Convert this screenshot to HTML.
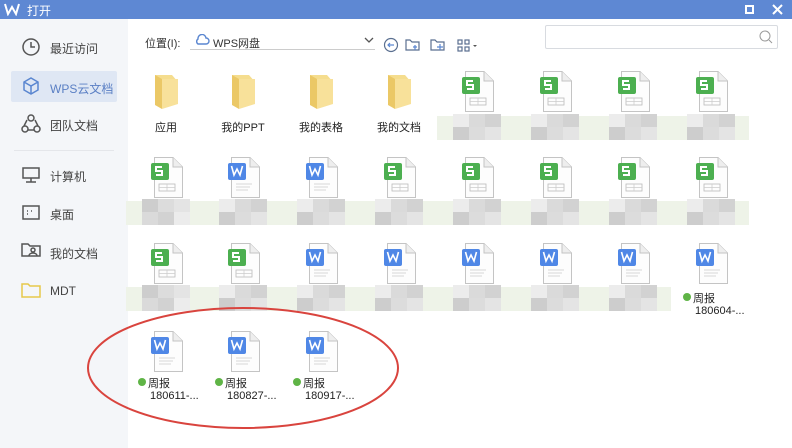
<!DOCTYPE html>
<html><head><meta charset="utf-8"><style>
*{margin:0;padding:0;box-sizing:border-box}
body{width:792px;height:448px;overflow:hidden;background:#fff;position:relative;font-family:"Liberation Sans","Noto Sans CJK SC",sans-serif;font-size:12px;color:#333}
.a{position:absolute}
#title{left:0;top:0;width:792px;height:19px;background:#5e88d3}
#side{left:0;top:19px;width:128px;height:429px;background:#f4f6f9}
.nav{position:absolute;left:20px;font-size:12px;color:#444}
.lbl{position:absolute;font-size:11px;color:#222;white-space:nowrap}
</style></head><body>
<div id="title" class="a">
 <svg class="a" style="left:4px;top:3px" width="16" height="13"><path d="M1 1 L4 11 L8 4 L12 11 L15 1" stroke="#fff" stroke-width="2" fill="none"/></svg>
 <div class="a" style="left:27px;top:2px;color:#fff;font-size:12px">打开</div>
 <div class="a" style="left:745px;top:5px;width:9px;height:9px;border:2px solid #fff"></div>
 <svg class="a" style="left:772px;top:4px" width="11" height="11"><path d="M1 1L10 10M10 1L1 10" stroke="#fff" stroke-width="2"/></svg>
</div>
<div id="side" class="a"></div>
<div class="a" style="left:11px;top:71px;width:106px;height:31px;background:#dfe7f4;border-radius:2px"></div>
<svg class="a" style="left:0;top:0" width="128" height="448" fill="none" stroke="#555" stroke-width="1.5">
 <circle cx="31" cy="47" r="8"/><path d="M31 42V47H35"/>
 <path d="M31 78L38 82V90L31 94L24 90V82Z M24 82L31 86L38 82M31 86V94" stroke="#5a86d0"/>
 <circle cx="31" cy="118" r="3"/><circle cx="25" cy="129" r="3"/><circle cx="37" cy="129" r="3"/><path d="M27 120L24 126M35 120L38 126M28 130H34"/>
 <rect x="23" y="168" width="16" height="10"/><path d="M31 178V182M26 182H36"/>
 <rect x="23" y="206" width="16" height="13"/><path d="M27 211h1M31 211h1M27 214h1"/>
 <path d="M22 244H28L30 246H40V256H22Z"/><circle cx="33" cy="250" r="2"/><path d="M29 256C29 252 37 252 37 256"/>
 <path d="M22 284H28L30 286H40V297H22Z" stroke="#e6c84a"/>
</svg>
<div class="nav" style="left:50px;top:40px">最近访问</div>
<div class="nav" style="left:50px;top:80px;color:#5a7fc4">WPS云文档</div>
<div class="nav" style="left:50px;top:117px">团队文档</div>
<div class="a" style="left:14px;top:150px;width:100px;height:1px;background:#e4e6ea"></div>
<div class="nav" style="left:50px;top:168px">计算机</div>
<div class="nav" style="left:50px;top:206px">桌面</div>
<div class="nav" style="left:50px;top:245px">我的文档</div>
<div class="nav" style="left:50px;top:284px">MDT</div>

<div class="a" style="left:145px;top:35px;font-size:11px;color:#333">位置(I):</div>
<div class="a" style="left:190px;top:49px;width:185px;height:1px;background:#ccc"></div>
<svg class="a" style="left:194px;top:34px" width="16" height="12"><path d="M4 10H12A3 3 0 0 0 12 4A4 4 0 0 0 4 5A3 3 0 0 0 4 10Z" stroke="#5a86d0" stroke-width="1.4" fill="none"/></svg>
<div class="a" style="left:213px;top:35px;font-size:11px">WPS网盘</div>
<svg class="a" style="left:364px;top:37px" width="10" height="7"><path d="M1 1L5 5L9 1" stroke="#555" stroke-width="1.3" fill="none"/></svg>
<svg class="a" style="left:382px;top:36px" width="100" height="18" fill="none" stroke="#5a6f90" stroke-width="1.2">
 <circle cx="9" cy="9" r="6.5"/><path d="M6 9H12M8 7L6 9L8 11" stroke="#5a86d0"/>
 <path d="M24 4H28L30 6H37V14H24Z"/><path d="M33 9V14M31 11H35" stroke="#5a86d0"/>
 <path d="M49 4H53L55 6H62V14H49Z"/><path d="M58 8V14M55 11H61" stroke="#5a86d0"/>
 <rect x="76" y="4" width="4" height="4"/><rect x="83" y="4" width="4" height="4"/><rect x="76" y="11" width="4" height="4"/><rect x="83" y="11" width="4" height="4"/>
 <path d="M91 9L95 9L93 11Z" fill="#555" stroke="none"/>
</svg>
<div class="a" style="left:545px;top:25px;width:233px;height:24px;border:1px solid #d8dbe0;border-radius:2px"></div>
<svg class="a" style="left:758px;top:29px" width="16" height="16"><circle cx="7" cy="7" r="5" stroke="#999" fill="none"/><path d="M11 11L14 14" stroke="#999"/></svg>

<div id="grid"></div>
<svg class="a" style="left:0;top:0" width="792" height="448"><ellipse cx="243" cy="368" rx="155" ry="60" fill="none" stroke="#d9443e" stroke-width="2"/></svg>
<script>
var cx=[166,243,321,399,477,555,633,711];
var g=document.getElementById('grid'),h='';
function folder(c,y,t){h+='<svg class="a" style="left:'+(c-12)+'px;top:'+y+'px" width="26" height="36"><path d="M1 1H18L24 8V30H1Z" fill="#f5dd8e"/><path d="M1 1L8 5V35L1 31Z" fill="#ebc866"/><path d="M8 5H24V30L8 35Z" fill="#f8e19a"/></svg><div class="lbl" style="left:'+(c-40)+'px;width:80px;text-align:center;top:'+(y+45)+'px">'+t+'</div>';}
function file(c,y,k){var col=k=='S'?'#4caf50':'#4f87e6';
 var body=k=='S'?'<rect x="8" y="27" width="16" height="7" fill="none" stroke="#bbb" stroke-width="0.8"/><path d="M8 30.5H24M16 27V34" stroke="#ccc" stroke-width="0.8"/>':'<path d="M8 27H24M8 30H22M8 33H20" stroke="#ccc" stroke-width="0.8"/>';
 var g2=k=='S'?'<path d="M11 10H5V14H11V18H5" stroke="#fff" stroke-width="2" fill="none"/>':'<path d="M3.5 9L6 18L9 12L12 18L14.5 9" stroke="#fff" stroke-width="1.6" fill="none"/>';
 h+='<svg class="a" style="left:'+(c-15)+'px;top:'+y+'px" width="34" height="42"><path d="M3.5 0.5H22L31.5 10V40.5H3.5Z" fill="#fdfdfd" stroke="#c4c4c4"/><path d="M22 0.5V10H31.5" fill="#eee" stroke="#c4c4c4"/>'+body+'<rect x="0" y="6" width="18" height="17" rx="2" fill="'+col+'"/><g transform="translate(0,0)">'+g2+'</g></svg>';}
function blur(c,y){var cols=['#dcdcdc','#d2d2d2','#e4e4e4','#ececec','#cdcdcd','#dadada'];
 h+='<div class="a" style="left:'+(c-40)+'px;top:'+(y+2)+'px;width:78px;height:24px;background:#eef3e8"></div>';
 for(var i=0;i<3;i++)for(var j=0;j<2;j++)h+='<div class="a" style="left:'+(c-24+i*16)+'px;top:'+(y+j*13)+'px;width:16px;height:13px;background:'+cols[(i*2+j+c)%6]+'"></div>';}
function lab(c,y,t){h+='<div class="a" style="left:'+(c-28)+'px;top:'+(y+3)+'px;width:8px;height:8px;border-radius:50%;background:#5fb446"></div><div class="lbl" style="left:'+(c-18)+'px;top:'+y+'px">周报</div><div class="lbl" style="left:'+(c-16)+'px;top:'+(y+15)+'px">'+t+'</div>';}
['应用','我的PPT','我的表格','我的文档'].forEach(function(t,i){folder(cx[i],74,t);});
for(var i=4;i<8;i++){file(cx[i],71,'S');blur(cx[i],114);}
'SWWSSSSS'.split('').forEach(function(k,i){file(cx[i],157,k);blur(cx[i],199);});
'SSWWWWWW'.split('').forEach(function(k,i){file(cx[i],243,k);if(i<7)blur(cx[i],285);});
lab(cx[7],290,'180604-...');
['180611-...','180827-...','180917-...'].forEach(function(t,i){file(cx[i],331,'W');lab(cx[i],375,t);});
g.innerHTML=h;
</script>
</body></html>
